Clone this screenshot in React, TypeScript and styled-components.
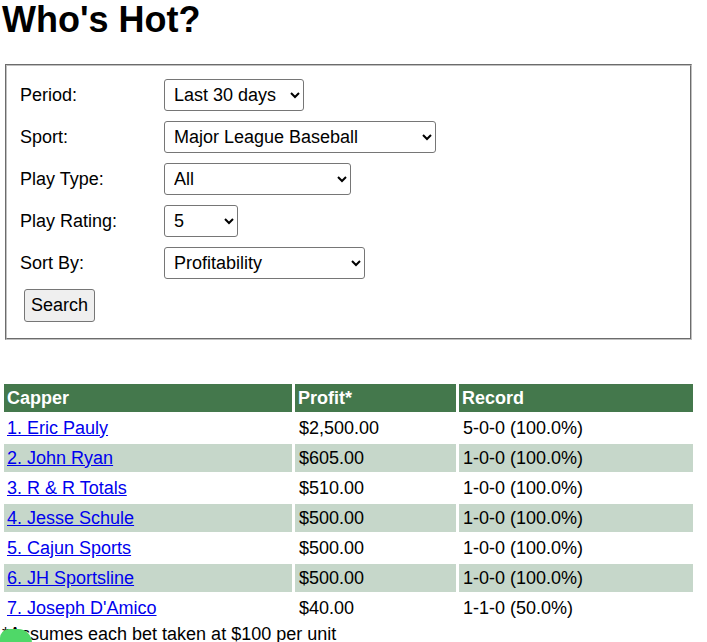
import { ReactElement } from "react";
import styled, { createGlobalStyle } from "styled-components";

const GlobalStyle = createGlobalStyle`
    html, body {
        margin: 0;
        padding: 0;
        overflow: hidden;
        background: #ffffff;
    }
    body {
        font-family: "Liberation Sans", Arial, sans-serif;
        color: #000;
    }
`;

const Page = styled.div`
    display: flex;
    flex-direction: column;
    width: 707px;
`;

const Title = styled.h1`
    margin: 0 0 0 2px;
    font-size: 36px;
    line-height: 40px;
    font-weight: bold;
`;

const FilterBox = styled.div`
    margin: 24px 0 0 5px;
    width: 687px;
    box-sizing: border-box;
    border: 2px groove #c0c0c0;
    padding: 13px 13px 16px 13px;
    display: grid;
    grid-template-columns: 144px auto;
    row-gap: 10px;
    align-items: center;
    justify-items: start;
`;

const Label = styled.label`
    font-size: 18px;
`;

const Select = styled.select<{ $width: number }>`
    width: ${(p) => p.$width}px;
    height: 32px;
    font-family: "Liberation Sans", Arial, sans-serif;
    font-size: 18px;
    color: #000;
    background: #fff;
    border: 1px solid #767676;
    border-radius: 3px;
    padding: 0 5px;
`;

const SearchButton = styled.button`
    grid-column: 1 / span 2;
    margin: 0 0 0 4px;
    height: 33px;
    padding: 0 6px;
    font-family: "Liberation Sans", Arial, sans-serif;
    font-size: 18px;
    background: #efefef;
    border: 1px solid #767676;
    border-radius: 3px;
    color: #000;
`;

const Table = styled.table`
    margin: 42px 0 0 1px;
    width: 695px;
    table-layout: fixed;
    border-collapse: separate;
    border-spacing: 3px 2px;
    font-size: 18px;
`;

const HeadCell = styled.th<{ $width?: number }>`
    ${(p) => (p.$width ? `width: ${p.$width}px;` : "")}
    box-sizing: border-box;
    background: #44784c;
    color: #fff;
    font-weight: bold;
    text-align: left;
    padding: 4px 3px 3px 3px;
    line-height: normal;
`;

const Row = styled.tr<{ $shaded: boolean }>`
    background: ${(p) => (p.$shaded ? "#c6d7ca" : "#ffffff")};
`;

const Cell = styled.td`
    padding: 3.5px 3px 3.5px 4px;
    line-height: normal;
    white-space: nowrap;
    &:first-child {
        padding-left: 3px;
    }
`;

const CapperLink = styled.a`
    color: #0000ee;
    text-decoration: underline;
`;

const Footnote = styled.div`
    margin-left: 2px;
    font-size: 18px;
    line-height: 20px;
`;

const ChatBubble = styled.div`
    position: fixed;
    left: 0;
    bottom: -22px;
    width: 32px;
    height: 35px;
    border-radius: 9px 14px 0 0;
    background: #4fd868;
`;

const cappers = [
  { name: "Eric Pauly", profit: "$2,500.00", record: "5-0-0 (100.0%)" },
  { name: "John Ryan", profit: "$605.00", record: "1-0-0 (100.0%)" },
  { name: "R & R Totals", profit: "$510.00", record: "1-0-0 (100.0%)" },
  { name: "Jesse Schule", profit: "$500.00", record: "1-0-0 (100.0%)" },
  { name: "Cajun Sports", profit: "$500.00", record: "1-0-0 (100.0%)" },
  { name: "JH Sportsline", profit: "$500.00", record: "1-0-0 (100.0%)" },
  { name: "Joseph D'Amico", profit: "$40.00", record: "1-1-0 (50.0%)" },
];

export const App = (): ReactElement => {
  return (
    <Page>
      <GlobalStyle />
      <Title>Who's Hot?</Title>
      <FilterBox>
        <Label>Period:</Label>
        <Select $width={140} defaultValue="30">
          <option value="30">Last 30 days</option>
        </Select>
        <Label>Sport:</Label>
        <Select $width={272} defaultValue="mlb">
          <option value="mlb">Major League Baseball</option>
        </Select>
        <Label>Play Type:</Label>
        <Select $width={187} defaultValue="all">
          <option value="all">All</option>
        </Select>
        <Label>Play Rating:</Label>
        <Select $width={74} defaultValue="5">
          <option value="5">5</option>
        </Select>
        <Label>Sort By:</Label>
        <Select $width={201} defaultValue="profit">
          <option value="profit">Profitability</option>
        </Select>
        <SearchButton>Search</SearchButton>
      </FilterBox>
      <Table>
        <thead>
          <tr>
            <HeadCell $width={288}>Capper</HeadCell>
            <HeadCell $width={161}>Profit*</HeadCell>
            <HeadCell>Record</HeadCell>
          </tr>
        </thead>
        <tbody>
          {cappers.map((c, i) => (
            <Row key={c.name} $shaded={i % 2 === 1}>
              <Cell>
                <CapperLink href="#">
                  {i + 1}. {c.name}
                </CapperLink>
              </Cell>
              <Cell>{c.profit}</Cell>
              <Cell>{c.record}</Cell>
            </Row>
          ))}
        </tbody>
      </Table>
      <Footnote>*Assumes each bet taken at $100 per unit</Footnote>
      <ChatBubble />
    </Page>
  );
};

export default App;
